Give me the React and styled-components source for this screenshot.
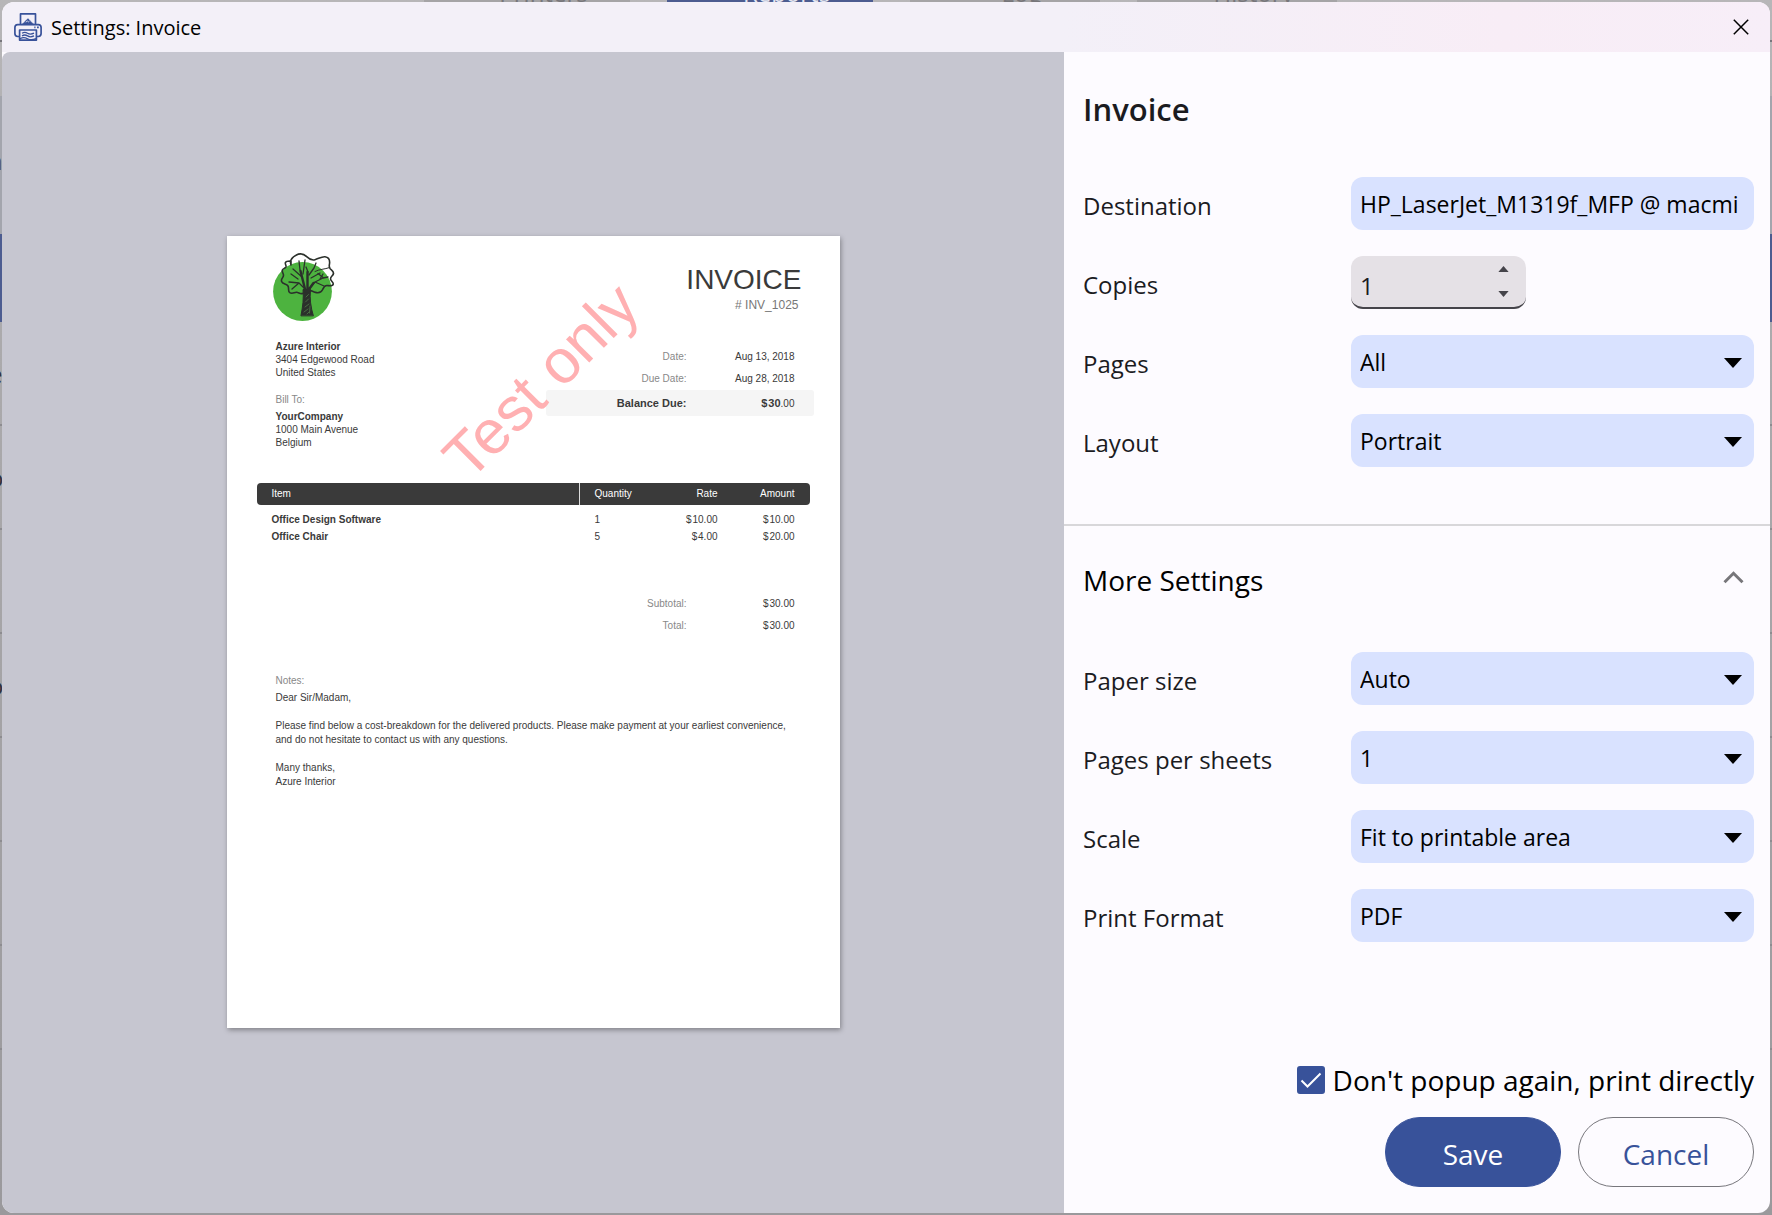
import React, {useState} from 'react';
import styled, {createGlobalStyle} from 'styled-components';

const tabs = [
    {name: 'Printers', width: 206},
    {name: 'Reports', width: 206, active: true},
    {name: 'Log', width: 190},
    {name: 'History', width: 200},
];

const backRows = ['e', 'o', '', 'o', '', '', ''];

const items = [
    {name: 'Office Design Software', quantity: 1, rate: '$\u200a10.00', amount: '$\u200a10.00'},
    {name: 'Office Chair', quantity: 5, rate: '$\u200a4.00', amount: '$\u200a20.00'},
];

function PrinterIcon() {
    return (
        <svg width="28" height="28" viewBox="0 0 28 28" fill="none" stroke="#38529a" strokeWidth="1.7" strokeLinejoin="round" aria-hidden="true">
            <path d="M6.5 11V.9h15V11"/>
            <path d="M7 11.6c2-.3 2.800-1.900 4-3 1.200-1.100 1.800-2.400 3-2.900 1.200.6 1.700 1.900 2.700 2.700 1.200 1 2.300 2.900 4.300 3.200z" fill="#38529a" strokeWidth=".6"/>
            <path d="M11.800 9.200l1.500-1.200 1 .9 1.200-.8" stroke="#f3f0f8" strokeWidth=".8"/>
            <path d="M5.500 23.500H3.700A2.900 2.900 0 0 1 .9 20.600v-6.100a2.900 2.900 0 0 1 2.800-2.900h20.600a2.900 2.900 0 0 1 2.800 2.900v6.100a2.900 2.900 0 0 1-2.800 2.900h-1.800"/>
            <path d="M5.600 17h16.800v10.100H5.600z"/>
            <path d="M20.300 14.400h1.200M23 14.400h1.800" strokeWidth="1.800"/>
            <path d="M8 20.200c2-1.300 3.500-1.300 5.500 0s4 1.200 6.500 0M8 22.900c2-1.300 3.500-1.300 5.500 0s4 1.200 6.500 0M6 25.700c2.500-1.500 5-1.500 7.500 0s5.500 1.200 8.500 0" strokeWidth="1.300"/>
        </svg>
    );
}

function TreeLogo() {
    return (
        <svg width="64" height="70" viewBox="0 0 64 70" fill="none" stroke="#2b302b" strokeWidth="1.600" strokeLinecap="round" strokeLinejoin="round" role="img" aria-label="Azure Interior">
            <circle cx="30.500" cy="39.500" r="29.400" fill="#4db33f" stroke="none"/>
            <path d="M19 13C17.500 8.500 20.500 5 24 3.200 28 1 32 2 35 4.800c2.500 2.400 4.500 4 8 2.900 3.500-.9 6.500-3.200 10-2.900 4 .5 4.800 3.400 4.600 6.200-.2 2.400-1.100 3.800.6 5.800 1.400 1.500 3.600 2.500 3.300 4.700-.4 2.300-3 3-3 5.300s3.200 3.300 2.700 5.400c-.6 2.300-3.700 1.500-6.200 1.300-2.800-.1-3.400 2-4.300 4-1.200 2.700-4.400 3.600-7.300 2.900-3-.7-4.500-2.600-7.400-1.900-2.500.6-3.400 2.700-6 3.100-2.400.4-3.500-1.400-5.600-1.300-2.400.2-4.300 2-6.600.4-2.300-1.700-.4-4.300-1.800-6.700-1.500-2.500-5.400-1.800-6.400-4.600-1-2.700 2-3.800 1.900-6.200-.1-2-1.800-3.200-1.100-5.200.7-1.900 3-1.400 3.600-3.300.4-1.500-1.300-2.800-.5-4.300.9-1.500 3.500-1.300 5.500-1.400z"/>
            <path d="M57.800 15.500C52 17.500 48 17 43 19.500" strokeWidth="1"/>
            <path d="M29 63.500c1.800-9 2.800-17 2-26h7.500c-1 9 .3 18 2.800 26z" fill="#2b302b" strokeWidth="1"/>
            <path d="M32 60l4-3M33 55l4-3M33.500 50l3-3M34 45l2.500-2.500M37.500 61l.5-7M35 62l2-2" stroke="#5a9650" strokeWidth=".6"/>
            <path d="M30 25l-9-8M28 18l-1-9M31 22l2-14M19 22l7 5M37 23l5-7 2-5M39 26l9-5M46 21.500l5 4" strokeWidth="1.300"/>
            <path d="M37 37l6-7 8-4 5-1M43 30l9 4M33 37l-6-6-10-1M27 31l-7 6M36 20l-2-5M48 27l3-5" strokeWidth="1.300"/>
            <path d="M35.500 39V20M33.500 39l-3-12-2-8M36.500 38l5-7" strokeWidth="2.400"/>
        </svg>
    );
}

function Backdrop() {
    return (
        <BackPage aria-hidden="true">
            <TabBar>
                {tabs.map(tab => (
                    <Tab key={tab.name} $width={tab.width} $active={tab.active}>{tab.name}</Tab>
                ))}
            </TabBar>
            <BackToolbar/>
            <BackHeader><span>n</span></BackHeader>
            <BackSelected/>
            {backRows.map((text, index) => (
                <BackRow key={index}><span>{text}</span><b>⋮</b></BackRow>
            ))}
        </BackPage>
    );
}

function InvoicePreview() {
    return (
        <Paper>
            <PaperTop>
                <Sender>
                    <TreeLogo/>
                    <Address>
                        <strong>Azure Interior</strong><br/>
                        3404 Edgewood Road<br/>
                        United States
                    </Address>
                    <Muted>Bill To:</Muted>
                    <BillAddress>
                        <strong>YourCompany</strong><br/>
                        1000 Main Avenue<br/>
                        Belgium
                    </BillAddress>
                </Sender>
                <Summary>
                    <PaperTitle>INVOICE</PaperTitle>
                    <PaperNumber># INV_1025</PaperNumber>
                    <SumRow><dt>Date:</dt><dd>Aug 13, 2018</dd></SumRow>
                    <SumRow><dt>Due Date:</dt><dd>Aug 28, 2018</dd></SumRow>
                    <BalanceRow><dt>Balance Due:</dt><dd><b>{'$\u200a30'}</b>.00</dd></BalanceRow>
                </Summary>
            </PaperTop>
            <Items>
                <thead>
                    <tr>
                        <th>Item</th>
                        <th>Quantity</th>
                        <th>Rate</th>
                        <th>Amount</th>
                    </tr>
                </thead>
                <tbody>
                    {items.map(item => (
                        <tr key={item.name}>
                            <td>{item.name}</td>
                            <td>{item.quantity}</td>
                            <td>{item.rate}</td>
                            <td>{item.amount}</td>
                        </tr>
                    ))}
                </tbody>
            </Items>
            <Totals>
                <SumRow><dt>Subtotal:</dt><dd>{'$\u200a30.00'}</dd></SumRow>
                <SumRow><dt>Total:</dt><dd>{'$\u200a30.00'}</dd></SumRow>
            </Totals>
            <Notes>
                <Muted>Notes:</Muted>
                <p>Dear Sir/Madam,</p>
                <p>
                    Please find below a cost-breakdown for the delivered products. Please make payment at your earliest convenience,<br/>
                    and do not hesitate to contact us with any questions.
                </p>
                <p>Many thanks,<br/>Azure Interior</p>
            </Notes>
            <Watermark>Test only</Watermark>
        </Paper>
    );
}

function SelectField({id, label, options}) {
    return (
        <>
            <Label htmlFor={id}>{label}</Label>
            <SelectWrapper>
                <Select id={id}>
                    {options.map(option => <option key={option}>{option}</option>)}
                </Select>
                <svg width="18" height="10" viewBox="0 0 18 10" aria-hidden="true"><path d="M0 0h18L9 10z"/></svg>
            </SelectWrapper>
        </>
    );
}

export default function App() {
    const [copies, setCopies] = useState(1);
    const [open, setOpen] = useState(true);

    return (
        <Screen>
            <GlobalStyle/>
            <Backdrop/>
            <Dialog role="dialog" aria-labelledby="dialog-title">
                <TitleBar>
                    <PrinterIcon/>
                    <h1 id="dialog-title">Settings: Invoice</h1>
                    <CloseButton aria-label="Close">
                        <svg width="16" height="16" viewBox="0 0 16 16" stroke="#000" strokeWidth="1.500" aria-hidden="true"><path d="M.8.8l14.400 14.400M15.200.8L.8 15.200"/></svg>
                    </CloseButton>
                </TitleBar>
                <Content>
                    <Preview><InvoicePreview/></Preview>
                    <Panel>
                        <Heading>Invoice</Heading>
                        <Fields>
                            <Label htmlFor="destination">Destination</Label>
                            <TextInput id="destination" defaultValue="HP_LaserJet_M1319f_MFP @ macmi"/>
                            <Label htmlFor="copies">Copies</Label>
                            <Spinner>
                                <input id="copies" inputMode="numeric" value={copies} onChange={e => setCopies(Number(e.target.value) || 1)}/>
                                <SpinButtons>
                                    <button aria-label="More copies" onClick={() => setCopies(copies + 1)}>
                                        <svg width="11" height="6" viewBox="0 0 12 7" fill="#45444a"><path d="M0 7L6 0l6 7z"/></svg>
                                    </button>
                                    <button aria-label="Fewer copies" onClick={() => setCopies(Math.max(1, copies - 1))}>
                                        <svg width="11" height="6" viewBox="0 0 12 7" fill="#45444a"><path d="M0 0h12L6 7z"/></svg>
                                    </button>
                                </SpinButtons>
                            </Spinner>
                            <SelectField id="pages" label="Pages" options={['All']}/>
                            <SelectField id="layout" label="Layout" options={['Portrait', 'Landscape']}/>
                        </Fields>
                        <Divider/>
                        <MoreButton aria-expanded={open} onClick={() => setOpen(!open)}>
                            More Settings
                            <Chevron $open={open} width="21" height="14" viewBox="0 0 21 14" fill="none" stroke="#77767a" strokeWidth="3" aria-hidden="true">
                                <path d="M1.500 12.300l9-9 9 9"/>
                            </Chevron>
                        </MoreButton>
                        {open && (
                            <Fields>
                                <SelectField id="paper" label="Paper size" options={['Auto', 'A4', 'Letter']}/>
                                <SelectField id="sheets" label="Pages per sheets" options={['1', '2', '4']}/>
                                <SelectField id="scale" label="Scale" options={['Fit to printable area']}/>
                                <SelectField id="format" label="Print Format" options={['PDF']}/>
                            </Fields>
                        )}
                        <Footer>
                            <CheckLabel>
                                <Checkbox type="checkbox" defaultChecked/>
                                Don't popup again, print directly
                            </CheckLabel>
                            <Actions>
                                <Button $primary>Save</Button>
                                <Button>Cancel</Button>
                            </Actions>
                        </Footer>
                    </Panel>
                </Content>
            </Dialog>
        </Screen>
    );
}

const GlobalStyle = createGlobalStyle`
    *{
        box-sizing: border-box;
    }
    body{
        margin: 0;
        color: #1b1b1f;
        font-family: "Segoe UI", "Open Sans", "Noto Sans", sans-serif;
    }
    button, input, select{
        font-family: inherit;
    }
    h1, h2, p, dl, dd{
        margin: 0;
    }
`;

const Screen = styled.div`
    position: relative;
    display: flex;
    min-height: 100vh;
    padding: 2px;
    background: #adacae;
`;

const BackPage = styled.div`
    position: absolute;
    inset: 0;
    overflow: hidden;
    color: #55545a;
    font-size: 24px;
    background: linear-gradient(#b7b6b8, #adacae 20%, #9a999c);
`;

const TabBar = styled.div`
    display: flex;
    justify-content: center;
    align-items: flex-start;
    gap: 37px;
    height: 42px;
    padding-right: 12px;
    border-bottom: 2px solid #77767c;
`;

const Tab = styled.div`
    width: ${props => props.$width}px;
    height: 40px;
    margin-top: -30px;
    padding-left: 34px;
    line-height: 46px;
    text-align: center;
    color: ${props => props.$active ? '#e4e6f0' : '#77767a'};
    background: ${props => props.$active ? '#4c5c90' : '#a5a4a6'};
`;

const BackToolbar = styled.div`
    height: 54px;
`;

const BackHeader = styled.div`
    height: 138px;
    padding-top: 48px;
    background: #a3a5ad;
    span{
        margin-left: -12px;
    }
`;

const BackSelected = styled.div`
    height: 88px;
    background: #4c5c90;
`;

const BackRow = styled.div`
    display: flex;
    justify-content: space-between;
    align-items: center;
    height: 104px;
    border-bottom: 2px solid #8d8c90;
    span{
        margin-left: -11px;
        color: #333238;
    }
    b{
        margin-right: -6px;
    }
`;

const Dialog = styled.div`
    position: relative;
    flex: 1;
    display: flex;
    flex-direction: column;
    overflow: hidden;
    border-radius: 12px;
    background: #fdfbff;
`;

const TitleBar = styled.header`
    display: flex;
    align-items: center;
    gap: 9px;
    height: 50px;
    padding-left: 12px;
    background: linear-gradient(90deg, #f3f0f8 60%, #f8edf6 85%, #f7eef8);
    h1{
        flex: 1;
        color: #000;
        font-size: 20px;
        font-weight: 400;
    }
`;

const CloseButton = styled.button`
    display: flex;
    justify-content: center;
    align-items: center;
    width: 58px;
    height: 50px;
    padding: 0;
    border: 0;
    background: none;
`;

const Content = styled.div`
    flex: 1;
    display: flex;
`;

const Preview = styled.section`
    flex: 1;
    display: flex;
    justify-content: center;
    align-items: center;
    padding: 24px 24px 26px;
    border-radius: 8px 0 0 0;
    background: #c6c6d0;
`;

const Paper = styled.article`
    position: relative;
    width: 613px;
    min-height: 792px;
    padding: 16px 26px 0 30px;
    color: #3a3a3a;
    font: 10px/13px "Liberation Sans", Arial, sans-serif;
    background: #fff;
    box-shadow: 1px 2px 5px rgba(0, 0, 0, .35);
`;

const PaperTop = styled.div`
    display: flex;
    justify-content: space-between;
`;

const Sender = styled.div`
    padding-left: 15px;
    svg{
        display: block;
    }
`;

const Address = styled.address`
    margin: 18px 0 14px 4px;
    font-style: normal;
`;

const BillAddress = styled.address`
    margin: 4px 0 0 4px;
    font-style: normal;
`;

const Muted = styled.div`
    color: #888;
    ${Sender} &{
        margin-left: 4px;
    }
`;

const Summary = styled.dl`
    width: 268px;
`;

const PaperTitle = styled.div`
    padding: 12px 12px 0 0;
    font-size: 28px;
    line-height: 32px;
    text-align: right;
`;

const PaperNumber = styled.div`
    margin-bottom: 32px;
    padding-right: 15px;
    color: #777;
    font-size: 12px;
    line-height: 18px;
    text-align: right;
`;

const SumRow = styled.div`
    display: flex;
    justify-content: flex-end;
    padding-right: 19px;
    line-height: 22px;
    text-align: right;
    dt{
        color: #888;
    }
    dd{
        width: 108px;
    }
`;

const BalanceRow = styled(SumRow)`
    height: 26px;
    border-radius: 3px;
    line-height: 26px;
    background: #f5f5f5;
    dt, b{
        color: #3a3a3a;
        font-size: 11px;
        font-weight: 700;
    }
`;

const Items = styled.table`
    width: 553px;
    margin-top: 34px;
    border-collapse: separate;
    border-spacing: 0;
    th, td{
        padding: 0 15px;
        text-align: left;
        font-weight: 400;
    }
    th{
        height: 22px;
        color: #fff;
        background: #3a3a3a;
    }
    th:first-child{
        border-right: 1px solid #ddd;
        border-radius: 4px 0 0 4px;
    }
    th:nth-child(2){
        width: 77px;
    }
    th:nth-child(3){
        width: 76px;
    }
    th:last-child{
        width: 77px;
        border-radius: 0 4px 4px 0;
    }
    td{
        height: 17px;
    }
    td:first-child{
        font-weight: 700;
    }
    th:nth-child(n + 3), td:nth-child(n + 3){
        text-align: right;
    }
    tbody tr:first-child td{
        height: 23px;
        padding-top: 6px;
    }
`;

const Totals = styled.dl`
    margin-top: 48px;
`;

const Notes = styled.div`
    margin-top: 37px;
    padding-left: 19px;
    line-height: 14px;
    p{
        margin-bottom: 14px;
        white-space: nowrap;
    }
    ${Muted}{
        margin-bottom: 3px;
    }
`;

const Watermark = styled.div`
    position: absolute;
    top: 145px;
    left: 314px;
    color: #ffb0b2;
    font-size: 62px;
    line-height: 66px;
    white-space: nowrap;
    transform: translate(-50%, -50%) rotate(-45deg);
`;

const Panel = styled.section`
    flex: 0 0 706px;
    display: flex;
    flex-direction: column;
    padding: 37px 16px 26px 19px;
`;

const Heading = styled.h2`
    margin-bottom: 48px;
    font-size: 31px;
    font-weight: 600;
    line-height: 40px;
`;

const Fields = styled.div`
    display: grid;
    grid-template-columns: 268px 1fr;
    gap: 26px 0;
`;

const Label = styled.label`
    padding-top: 4px;
    font-size: 24px;
    line-height: 49px;
`;

const SelectWrapper = styled.div`
    position: relative;
    svg{
        position: absolute;
        top: 23px;
        right: 12px;
        pointer-events: none;
    }
`;

const Select = styled.select`
    display: block;
    width: 100%;
    height: 53px;
    padding: 0 40px 0 9px;
    appearance: none;
    border: 0;
    border-radius: 12px;
    color: #000;
    font-size: 23px;
    background: #d9e2ff;
`;

const TextInput = styled.input`
    width: 100%;
    height: 53px;
    padding: 0 8px 0 9px;
    border: 0;
    border-radius: 12px;
    color: #000;
    font-size: 23px;
    background: #d9e2ff;
`;

const Spinner = styled.div`
    display: flex;
    width: 175px;
    height: 53px;
    overflow: hidden;
    border-bottom: 2px solid #45444a;
    border-radius: 12px;
    background: #e5e1e6;
    input{
        flex: 1;
        min-width: 0;
        padding: 7px 0 0 9px;
        border: 0;
        color: #1b1b1f;
        font-size: 24px;
        background: none;
    }
`;

const SpinButtons = styled.div`
    display: flex;
    flex-direction: column;
    width: 46px;
    button{
        flex: 1;
        display: flex;
        justify-content: center;
        align-items: center;
        padding: 0;
        border: 0;
        background: none;
    }
`;

const Divider = styled.hr`
    width: calc(100% + 35px);
    height: 2px;
    margin: 57px -16px 0 -19px;
    border: 0;
    background: #d8d7da;
`;

const MoreButton = styled.button`
    display: flex;
    justify-content: space-between;
    align-items: center;
    height: 56px;
    margin: 26px 0 44px;
    padding: 0 10px 0 0;
    border: 0;
    color: #000;
    font-size: 28px;
    background: none;
`;

const Chevron = styled.svg`
    margin-bottom: 6px;
    transform: ${props => props.$open ? 'none' : 'rotate(180deg)'};
`;

const Footer = styled.footer`
    display: flex;
    flex-direction: column;
    align-items: flex-end;
    gap: 17px;
    margin-top: auto;
`;

const CheckLabel = styled.label`
    display: flex;
    align-items: center;
    gap: 8px;
    color: #000;
    font-size: 28px;
    line-height: 40px;
`;

const Checkbox = styled.input`
    width: 28px;
    height: 28px;
    margin: 0;
    appearance: none;
    border: 2px solid #38529a;
    border-radius: 3px;
    &:checked{
        background: #38529a url("data:image/svg+xml,%3Csvg xmlns='http://www.w3.org/2000/svg' viewBox='0 0 24 24' fill='none' stroke='white' stroke-width='2'%3E%3Cpath d='M2.500 12.500l6 6 13-13'/%3E%3C/svg%3E") center / 24px no-repeat;
    }
`;

const Actions = styled.div`
    display: flex;
    gap: 17px;
`;

const Button = styled.button`
    width: 176px;
    height: 70px;
    padding: 4px 0 0;
    border: 1px solid ${props => props.$primary ? '#38529a' : '#77767c'};
    border-radius: 35px;
    color: ${props => props.$primary ? '#fff' : '#38529a'};
    font-size: 28px;
    background: ${props => props.$primary ? '#38529a' : 'transparent'};
`;
